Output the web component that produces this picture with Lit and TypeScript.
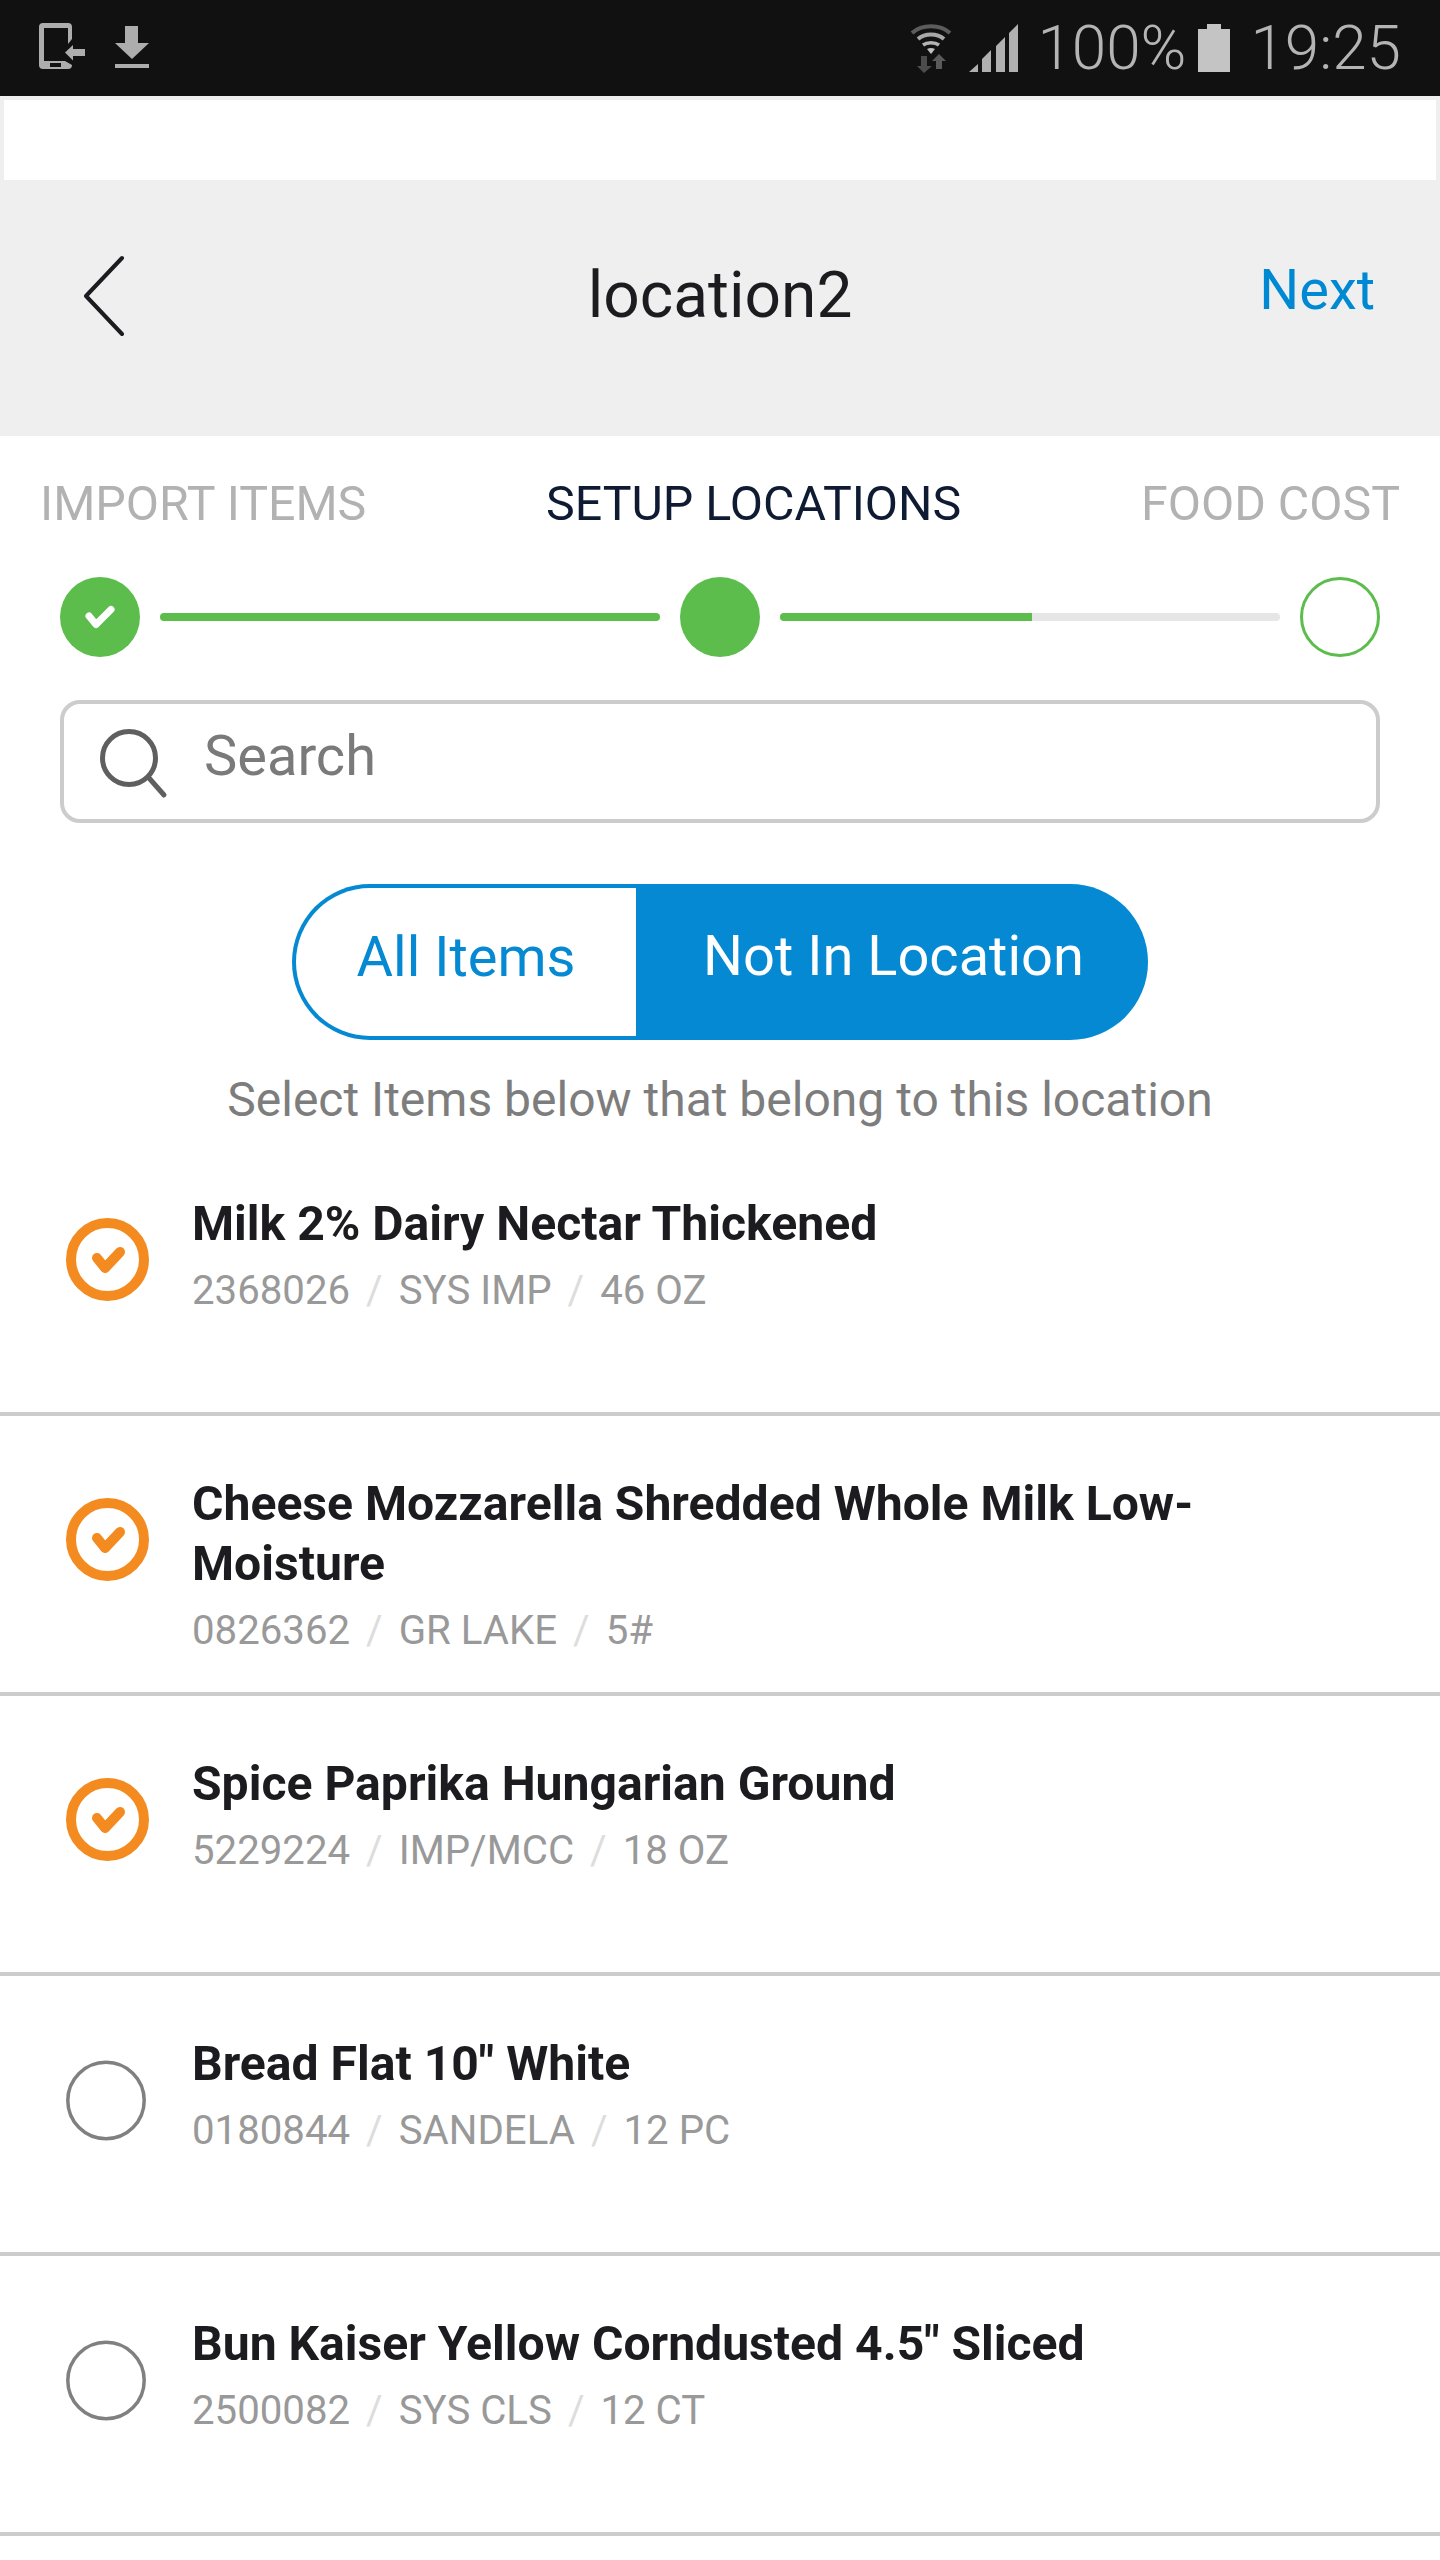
import { LitElement, html, css, svg } from "lit";
import { customElement } from "lit/decorators.js";

interface Item {
  name: string;
  code: string;
  brand: string;
  size: string;
  checked: boolean;
}

const ITEMS: Item[] = [
  { name: "Milk 2% Dairy Nectar Thickened", code: "2368026", brand: "SYS IMP", size: "46 OZ", checked: true },
  { name: "Cheese Mozzarella Shredded Whole Milk Low-Moisture", code: "0826362", brand: "GR LAKE", size: "5#", checked: true },
  { name: "Spice Paprika Hungarian Ground", code: "5229224", brand: "IMP/MCC", size: "18 OZ", checked: true },
  { name: 'Bread Flat 10" White', code: "0180844", brand: "SANDELA", size: "12 PC", checked: false },
  { name: 'Bun Kaiser Yellow Corndusted 4.5" Sliced', code: "2500082", brand: "SYS CLS", size: "12 CT", checked: false },
];

const checkedIcon = svg`<svg class="tick" width="84" height="84" viewBox="0 0 84 84">
  <circle cx="41.5" cy="42.5" r="36.5" fill="none" stroke="#f38b20" stroke-width="10" />
  <path d="M31 41l8 10 15-16" fill="none" stroke="#f38b20" stroke-width="10" stroke-linecap="round" stroke-linejoin="round" />
</svg>`;

const emptyIcon = svg`<svg class="tick" width="84" height="84" viewBox="0 0 84 84">
  <circle cx="40" cy="43.5" r="38.2" fill="none" stroke="#808080" stroke-width="3.5" />
</svg>`;

@customElement("app-root")
export class AppRoot extends LitElement {
  static styles = css`
    :host {
      display: block;
      width: 1440px;
      height: 2560px;
      background: #fff;
      font-family: Roboto, "Liberation Sans", sans-serif;
      overflow: hidden;
    }
    .status {
      height: 96px;
      background: #111;
      display: flex;
      align-items: center;
      justify-content: space-between;
      padding: 0 39px 0 39px;
      box-sizing: border-box;
    }
    .status-left,
    .status-right {
      display: flex;
      align-items: center;
    }
    .status-left {
      gap: 30px;
      padding-bottom: 4px;
    }
    .status-right {
      color: #b4b4b4;
      font-size: 62px;
      font-weight: 300;
      line-height: 96px;
    }
    .strip {
      height: 80px;
      margin: 0 4px;
      border-top: 4px solid #efefef;
      background: #fff;
    }
    .strip-wrap {
      background: #efefef;
    }
    .header {
      height: 256px;
      background: #efefef;
      display: grid;
      grid-template-columns: 1fr auto 1fr;
      align-items: center;
      padding: 0 65px 26px 65px;
      box-sizing: border-box;
    }
    .back {
      display: block;
      margin: 2px 0 0 19px;
    }
    .title {
      font-size: 64px;
      font-weight: 400;
      color: #1c1c20;
    }
    .next {
      justify-self: end;
      font-size: 56px;
      font-weight: 400;
      color: #0089d3;
      margin: -10px 0 0 0;
    }
    .labels {
      display: flex;
      justify-content: space-between;
      padding: 40px 40px 0 40px;
      font-size: 48.3px;
      font-weight: 400;
      line-height: 56px;
      color: #b2b2b2;
    }
    .labels .active {
      color: #0f1a33;
    }
    .stepper {
      display: flex;
      align-items: center;
      gap: 20px;
      padding: 0 60px;
      margin-top: 45px;
    }
    .dot {
      flex: none;
      width: 80px;
      height: 80px;
      border-radius: 50%;
      background: #5cbd4d;
      box-sizing: border-box;
      display: flex;
      align-items: center;
      justify-content: center;
    }
    .dot.open {
      background: #fff;
      border: 3px solid #5cbd4d;
    }
    .bar {
      flex: 1;
      height: 8px;
      border-radius: 4px;
      background: #e6e6e6;
      overflow: hidden;
    }
    .bar-fill {
      height: 100%;
      background: #5cbd4d;
    }
    .search {
      margin: 43px 60px 0;
      height: 123px;
      box-sizing: border-box;
      border: 4px solid #ccc;
      border-radius: 20px;
      display: flex;
      align-items: center;
      padding-left: 36px;
      gap: 34px;
      font-size: 56px;
      color: #7a7a7a;
      font-weight: 400;
    }
    .search svg {
      flex: none;
      margin-top: 4px;
    }
    .search span {
      margin-top: -12px;
    }
    .segment {
      display: flex;
      justify-content: center;
      margin-top: 61px;
    }
    .seg {
      height: 156px;
      box-sizing: border-box;
      display: flex;
      align-items: center;
      justify-content: center;
      font-size: 56px;
      font-weight: 400;
      padding-bottom: 12px;
    }
    .seg.left {
      width: 344px;
      border: 4px solid #0489d2;
      border-right: none;
      border-radius: 78px 0 0 78px;
      color: #0489d2;
      padding-bottom: 10px;
    }
    .seg.right {
      width: 512px;
      background: #0489d2;
      color: #fff;
      border-radius: 0 78px 78px 0;
      padding-left: 3px;
    }
    .hint {
      text-align: center;
      font-size: 48px;
      font-weight: 400;
      color: #7d7d7d;
      margin-top: 32px;
      margin-bottom: 8px;
      line-height: 56px;
    }
    .row {
      height: 280px;
      box-sizing: border-box;
      border-bottom: 4px solid #ccc;
      display: flex;
      padding-left: 66px;
    }
    .tick {
      flex: none;
      margin-top: 81px;
    }
    .row-body {
      margin-left: 42px;
      padding-top: 58px;
    }
    .row-name {
      font-size: 48.1px;
      font-weight: 700;
      line-height: 60px;
      color: #1c1c20;
      max-width: 1100px;
    }
    .row-meta {
      font-size: 40.2px;
      line-height: 50px;
      margin-top: 12px;
      color: #999;
      font-weight: 400;
    }
    .row-meta i {
      font-style: normal;
      color: #ddd;
      margin: 0 16px;
    }
    .wifi {
      margin-right: 17px;
    }
    .signal {
      margin-right: 19px;
    }
    .battery {
      margin: 0 20px 0 12px;
    }
  `;

  private renderStatus() {
    return html`<div class="status">
      <div class="status-left">
        <svg width="46" height="46" viewBox="0 0 46 46">
          <path fill-rule="evenodd" fill="#adadad" d="M4 0H29a4 4 0 0 1 4 4V16l-4 5V5H5V38H26l7 4a4 4 0 0 1-4 4H4a4 4 0 0 1-4-4V4a4 4 0 0 1 4-4zM11 40v4h11v-4z" />
          <path fill="#adadad" d="M26 29.5L34 22v4h12v7H34v4.5z" />
        </svg>
        <svg width="34" height="42" viewBox="0 0 34 42" style="margin-top:2px">
          <path fill="#adadad" d="M10 0h13v17h11L17 33 0 17h10zM0 38h34v4H0z" />
        </svg>
      </div>
      <div class="status-right">
        <svg class="wifi" width="42" height="50" viewBox="0 0 42 50">
          <path fill="none" stroke="#5c5c5c" stroke-width="4" d="M2 10C12 1 30 1 40 10" />
          <path fill="none" stroke="#a8a8a8" stroke-width="4" d="M8 16C15 10 27 10 34 16" />
          <path fill="none" stroke="#b4b4b4" stroke-width="3.5" d="M13 22c4-3 12-3 16 0" />
          <path fill="#c0c0c0" d="M17 26c3-1.5 5-1.5 8 0l-4 5z" />
          <path fill="#4c4c4c" d="M11 33h6v10h5l-8 7-7-7h4z" />
          <path fill="#5a5a5a" d="M26 46h6V38h4l-7-7-7 7h4z" />
        </svg>
        <svg class="signal" width="49" height="48" viewBox="0 0 49 48">
          <path fill="#b0b0b0" d="M0 48L9 40v8zM13 48V35l9-9v22zM27 48V22l9-9v35zM40 48V9l9-9v48z" />
        </svg>
        <span>100%</span>
        <svg class="battery" width="32" height="48" viewBox="0 0 32 48">
          <path fill="#c4c4c4" d="M9 0h14v5h9v43H0V5h9z" />
        </svg>
        <span>19:25</span>
      </div>
    </div>`;
  }

  private renderRow(item: Item) {
    return html`<div class="row">
      ${item.checked ? checkedIcon : emptyIcon}
      <div class="row-body">
        <div class="row-name">${item.name}</div>
        <div class="row-meta">${item.code}<i>/</i>${item.brand}<i>/</i>${item.size}</div>
      </div>
    </div>`;
  }

  render() {
    return html`
      ${this.renderStatus()}
      <div class="strip-wrap"><div class="strip"></div></div>
      <div class="header">
        <svg class="back" width="42" height="84" viewBox="0 0 42 84">
          <path d="M38 4L2 42l36 38" fill="none" stroke="#1c1c20" stroke-width="4" stroke-linecap="round" stroke-linejoin="round" />
        </svg>
        <div class="title">location2</div>
        <div class="next">Next</div>
      </div>
      <div class="labels">
        <span>IMPORT ITEMS</span>
        <span class="active">SETUP LOCATIONS</span>
        <span>FOOD COST</span>
      </div>
      <div class="stepper">
        <div class="dot">
          <svg width="32" height="24" viewBox="0 0 32 24">
            <path d="M5 11l7 8.5L27 4.5" fill="none" stroke="#fff" stroke-width="7" stroke-linecap="round" stroke-linejoin="round" />
          </svg>
        </div>
        <div class="bar"><div class="bar-fill" style="width:100%"></div></div>
        <div class="dot"></div>
        <div class="bar"><div class="bar-fill" style="width:50.4%"></div></div>
        <div class="dot open"></div>
      </div>
      <div class="search">
        <svg width="70" height="70" viewBox="0 0 70 70">
          <circle cx="29" cy="29" r="26.5" fill="none" stroke="#5f5f5f" stroke-width="5" />
          <path d="M49 49l15 17" fill="none" stroke="#5f5f5f" stroke-width="5" stroke-linecap="round" />
        </svg>
        <span>Search</span>
      </div>
      <div class="segment">
        <div class="seg left">All Items</div>
        <div class="seg right">Not In Location</div>
      </div>
      <div class="hint">Select Items below that belong to this location</div>
      <div>${ITEMS.map((item) => this.renderRow(item))}</div>
    `;
  }
}

declare global {
  interface HTMLElementTagNameMap {
    "app-root": AppRoot;
  }
}
